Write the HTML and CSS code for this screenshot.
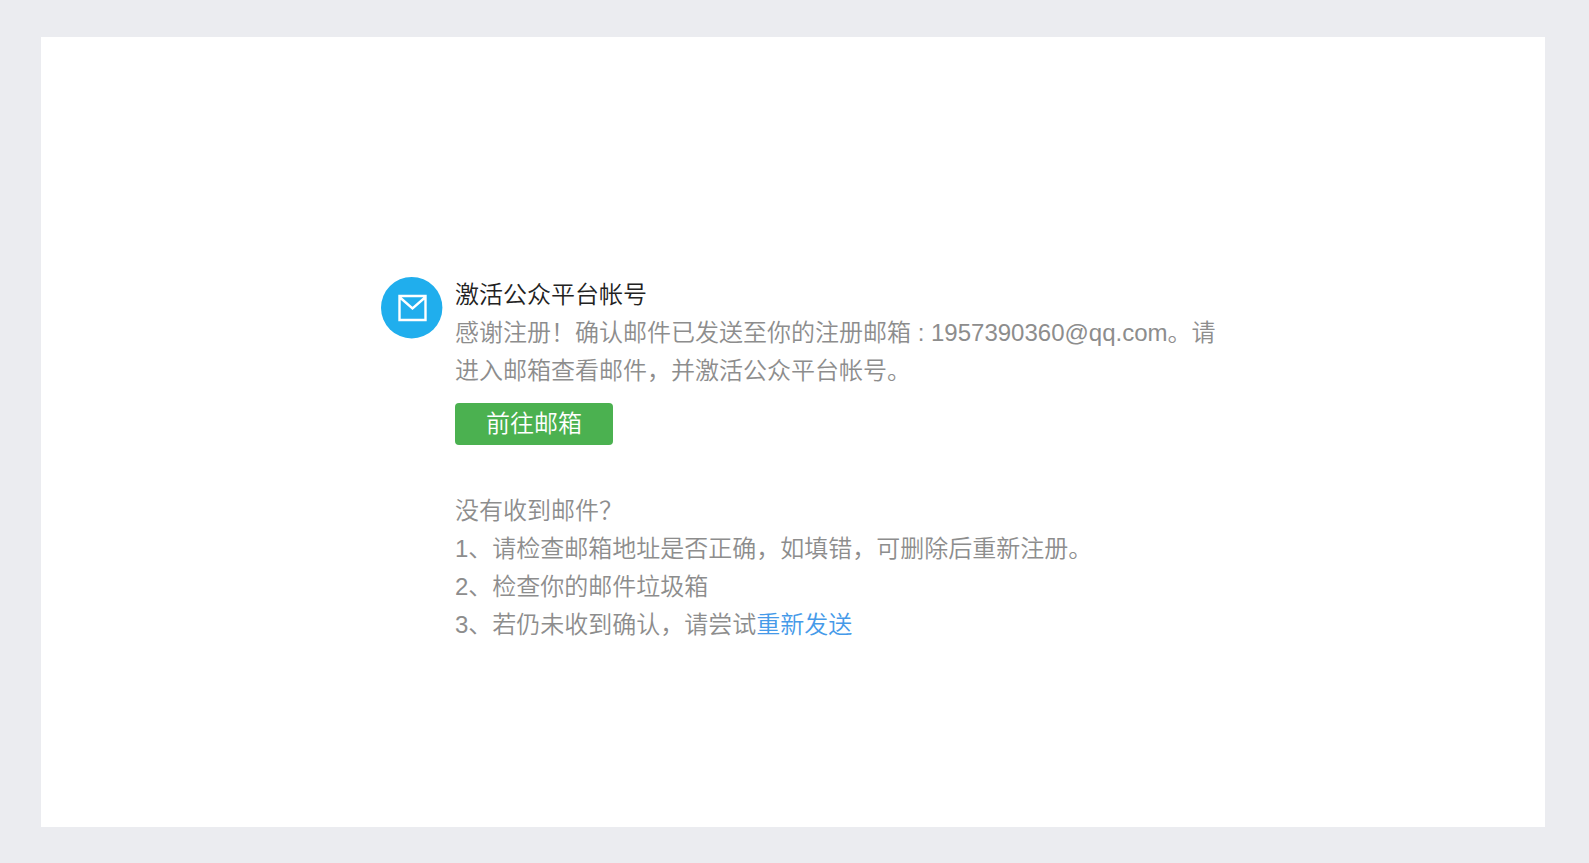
FILE: index.html
```html
<!DOCTYPE html>
<html lang="zh-CN">
<head>
    <meta charset="UTF-8">
    <meta name="viewport" content="width=device-width, initial-scale=1.0">
    <title>激活公众平台帐号</title>
    <link rel="stylesheet" href="styles.css">
</head>
<body>
    <main class="card">
        <div class="notice">
            <svg class="icon" viewBox="0 0 62 62" aria-hidden="true">
                <circle cx="30.7" cy="30.7" r="30.7" fill="#20aeed"/>
                <path d="M18.5 19h26v24h-26z M19 20.5l12.5 11 12.5-11" fill="none" stroke="#fff" stroke-width="2.4"/>
            </svg>
            <div class="content">
                <h1 class="title">激活公众平台帐号</h1>
                <p class="text">感谢注册！确认邮件已发送至你的注册邮箱 : 1957390360@qq.com。请进入邮箱查看邮件，并激活公众平台帐号。</p>
                <button type="button" class="btn">前往邮箱</button>
                <div class="help">
                    <p class="text">没有收到邮件？</p>
                    <p class="text">1、请检查邮箱地址是否正确，如填错，可删除后重新注册。</p>
                    <p class="text">2、检查你的邮件垃圾箱</p>
                    <p class="text">3、若仍未收到确认，请尝试<a href="#" class="link">重新发送</a></p>
                </div>
            </div>
        </div>
    </main>
</body>
</html>
```
FILE: styles.css
```css
* {
    box-sizing: border-box;
}
body {
    margin: 0;
    min-height: 100vh;
    display: flex;
    padding: 37px 44px 36px 41px;
    background-color: #ebecf0;
    color: #8d8d8d;
    font-family: "Liberation Sans", "Noto Sans CJK SC", sans-serif;
    font-size: 24px;
    font-weight: 350;
    line-height: 38px;
}
.card {
    flex: 1;
    padding: 239px 24px 24px;
    background-color: #fff;
}
.notice {
    display: flex;
    gap: 12px;
    max-width: 852px;
    margin: 0 auto;
    padding-left: 14px;
}
.icon {
    flex: none;
    width: 62px;
    height: 62px;
    margin-top: 1px;
}
.content {
    flex: 1;
}
.title {
    margin: 0;
    color: #222;
    font-size: 24px;
    font-weight: 350;
}
.text {
    margin: 0;
}
.btn {
    display: block;
    width: 158px;
    height: 42px;
    margin: 13px 0 0;
    padding: 0;
    border: none;
    border-radius: 4px;
    background-color: #4bb150;
    color: #fff;
    font: inherit;
    cursor: pointer;
}
.help {
    margin-top: 47px;
}
.link {
    color: #459ae9;
    text-decoration: none;
}
```
